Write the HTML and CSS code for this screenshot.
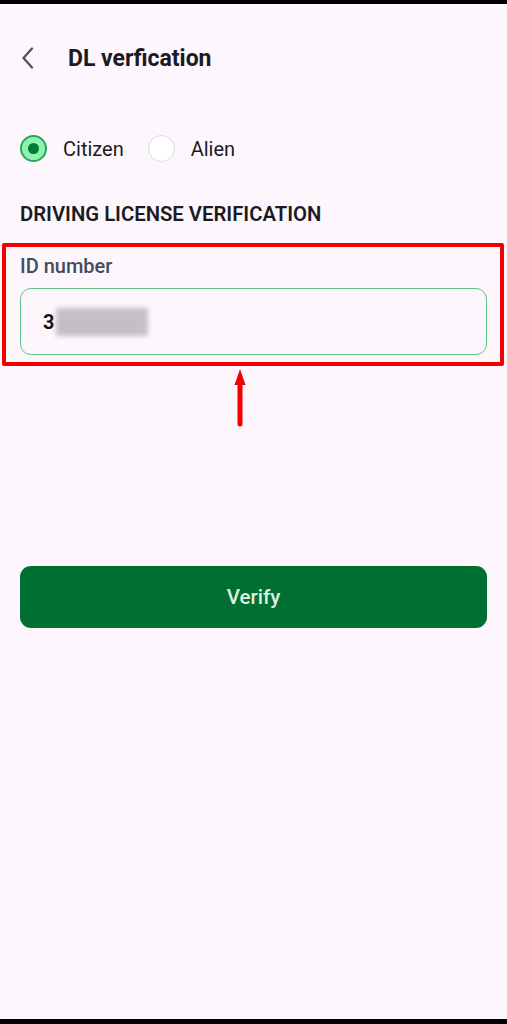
FILE: index.html
```
<!DOCTYPE html>
<html>
<head>
<meta charset="utf-8">
<link rel="stylesheet" href="styles.css">
</head>
<body>
<div class="screen">
  <header class="header">
    <span class="back">
      <svg width="14" height="22" viewBox="0 0 14 22"><path d="M11 1.5 L2.5 11 L11 20.5" fill="none" stroke="#4a5366" stroke-width="2.3" stroke-linecap="round" stroke-linejoin="round"/></svg>
    </span>
    <h1 class="title">DL verfication</h1>
  </header>

  <div class="radios">
    <label class="radio">
      <span class="dot dot-on"><span class="dot-inner"></span></span>
      <span class="radio-text">Citizen</span>
    </label>
    <label class="radio">
      <span class="dot dot-off"></span>
      <span class="radio-text">Alien</span>
    </label>
  </div>

  <h2 class="section">DRIVING LICENSE VERIFICATION</h2>

  <div class="field">
    <div class="field-label">ID number</div>
    <div class="input">
      <span class="value">3</span><span class="blur"></span>
    </div>
    <div class="highlight"></div>
    <div class="arrow">
      <svg width="12" height="58" viewBox="0 0 12 58"><polygon points="6,0 11.5,16 0.5,16" fill="#f20000"/><line x1="6" y1="12" x2="6" y2="55" stroke="#f20000" stroke-width="5" stroke-linecap="round"/></svg>
    </div>
  </div>

  <button class="btn">Verify</button>
</div>
</body>
</html>
```
FILE: styles.css
```
html, body {
  margin: 0;
  padding: 0;
  background: #fdf7fd;
}
body {
  font-family: Roboto, "Liberation Sans", sans-serif;
  color: #1b1b1f;
}
.screen {
  box-sizing: border-box;
  height: 1024px;
  border-top: 4px solid #000;
  border-bottom: 5px solid #000;
  background: #fdf7fd;
}
.header {
  display: flex;
  align-items: center;
  height: 40px;
  padding: 34px 20px 0 21px;
}
.back {
  display: flex;
  width: 14px;
  height: 22px;
}
.title {
  margin: 0 0 0 33px;
  font-size: 23px;
  font-weight: 700;
  color: #1b1b1f;
}
.radios {
  display: flex;
  align-items: center;
  margin-top: 57px;
  padding-left: 20px;
  height: 27px;
}
.radio {
  display: flex;
  align-items: center;
}
.radio + .radio {
  margin-left: 24px;
}
.dot {
  box-sizing: border-box;
  width: 27px;
  height: 27px;
  border-radius: 50%;
  display: flex;
  align-items: center;
  justify-content: center;
}
.dot-on {
  background: #8ff2b0;
  border: 2px solid #27a858;
}
.dot-inner {
  width: 11px;
  height: 11px;
  border-radius: 50%;
  background: #017a36;
}
.dot-off {
  background: #ffffff;
  border: 1.5px solid #d9d9de;
}
.radio-text {
  margin-left: 16px;
  font-size: 20px;
  color: #1b1b1f;
}
.section {
  margin: 40px 0 0;
  padding-left: 20px;
  font-size: 20.3px;
  line-height: 24px;
  font-weight: 600;
  color: #1b1b1f;
}
.field {
  position: relative;
  margin-top: 28px;
  padding: 0 20px;
}
.field-label {
  font-size: 20px;
  line-height: 24px;
  font-weight: 500;
  color: #434c5e;
}
.input {
  box-sizing: border-box;
  margin-top: 10px;
  height: 67px;
  border: 1.5px solid #5fc585;
  border-radius: 11px;
  display: flex;
  align-items: center;
  padding-left: 22px;
}
.value {
  font-size: 20px;
  font-weight: 700;
  color: #111;
}
.blur {
  display: block;
  width: 92px;
  height: 28px;
  margin-left: 2px;
  background: #c6bec7;
  filter: blur(2.5px);
}
.highlight {
  position: absolute;
  left: 2px;
  right: 3px;
  top: -11px;
  bottom: -11px;
  border: 4px solid #f20000;
  border-radius: 2px;
  box-sizing: border-box;
}
.arrow {
  position: absolute;
  left: 234px;
  top: 115px;
  display: flex;
}
.btn {
  display: block;
  box-sizing: border-box;
  margin: 211px 20px 0;
  width: calc(100% - 40px);
  height: 62px;
  border: none;
  border-radius: 11px;
  background: #006f32;
  color: #dcefe0;
  font-family: Roboto, "Liberation Sans", sans-serif;
  font-size: 20.5px;
  font-weight: 500;
}
```
